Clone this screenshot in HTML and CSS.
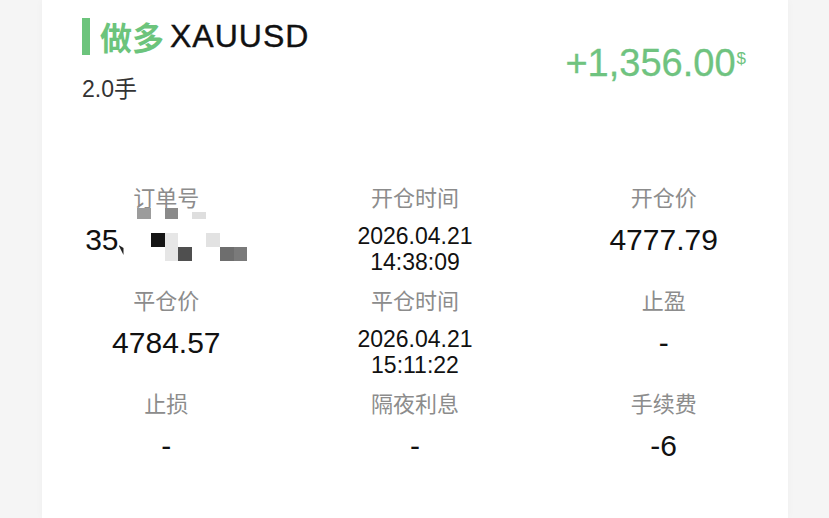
FILE: index.html
```html
<!DOCTYPE html>
<html lang="zh-CN">
<head>
  <meta charset="UTF-8" />
  <title>订单详情</title>
  <link rel="stylesheet" href="styles.css">
</head>
<body>
  <div class="card">
    <div class="head">
      <div class="head-left">
        <div class="title">
          <span class="bar"></span>
          <span class="side">做多</span>
          <span class="symbol">XAUUSD</span>
        </div>
        <div class="lots">2.0手</div>
      </div>
      <div class="profit">
        <span class="amount">+1,356.00</span>
        <span class="cur">$</span>
      </div>
    </div>

    <div class="grid">
      <div class="cell">
        <div class="label">订单号</div>
        <div class="value">35<span class="mosaic">
          <i class="m m1"></i><i class="m m2"></i><i class="m m3"></i>
          <i class="m m4"></i><i class="m m5"></i><i class="m m6"></i>
          <i class="m m7"></i><i class="m m8"></i><i class="m m9"></i>
        </span></div>
      </div>
      <div class="cell">
        <div class="label">开仓时间</div>
        <div class="value date">2026.04.21<br>14:38:09</div>
      </div>
      <div class="cell">
        <div class="label">开仓价</div>
        <div class="value">4777.79</div>
      </div>

      <div class="cell">
        <div class="label">平仓价</div>
        <div class="value">4784.57</div>
      </div>
      <div class="cell">
        <div class="label">平仓时间</div>
        <div class="value date">2026.04.21<br>15:11:22</div>
      </div>
      <div class="cell">
        <div class="label">止盈</div>
        <div class="value">-</div>
      </div>

      <div class="cell">
        <div class="label">止损</div>
        <div class="value">-</div>
      </div>
      <div class="cell">
        <div class="label">隔夜利息</div>
        <div class="value">-</div>
      </div>
      <div class="cell">
        <div class="label">手续费</div>
        <div class="value">-6</div>
      </div>
    </div>
  </div>
</body>
</html>
```

FILE: styles.css
```css
body {
  margin: 0;
  background-color: #f5f5f5;
  font-family: "Liberation Sans", "Noto Sans CJK SC", sans-serif;
  color: #111;
}
.card {
  background: white;
  margin: 0 41px 0 42px;
  min-height: 518px;
  box-shadow: 0 0 8px rgba(0,0,0,0.03);
}
.head {
  display: flex;
  justify-content: space-between;
  align-items: flex-start;
  padding: 14px 42px 0 40px;
}
.title {
  display: flex;
  align-items: center;
  height: 44px;
  font-size: 32px;
}
.bar {
  width: 8px;
  height: 37px;
  background-color: #6cc47c;
  margin-right: 10px;
}
.side {
  color: #6cc47c;
  font-weight: bold;
  margin-right: 6px;
}
.symbol {
  letter-spacing: 1px;
  color: #111;
  -webkit-text-stroke: 0.4px #111;
}
.lots {
  margin-top: 16px;
  font-size: 23px;
  line-height: 30px;
  color: #333;
}
.profit {
  display: flex;
  align-items: flex-start;
  margin-top: 27px;
  color: #6fc380;
}
.amount {
  font-size: 38px;
  line-height: 44px;
  -webkit-text-stroke: 0.3px #6fc380;
}
.cur {
  font-size: 17px;
  line-height: 17px;
  margin-top: 9px;
  margin-left: 1px;
}
.grid {
  display: grid;
  grid-template-columns: 1fr 1fr 1fr;
  row-gap: 12px;
  margin-top: 80px;
}
.cell {
  display: flex;
  flex-direction: column;
  align-items: center;
}
.label {
  font-size: 22px;
  line-height: 30px;
  color: #8c8c8c;
}
.value {
  margin-top: 9px;
  font-size: 30px;
  line-height: 34px;
  white-space: nowrap;
}
.value.date {
  font-size: 23px;
  line-height: 26px;
  text-align: center;
}
.mosaic {
  position: relative;
  display: inline-block;
  vertical-align: top;
  width: 129px;
  height: 34px;
}
.m {
  position: absolute;
  display: block;
}
.m1 { left: 18px; top: -15px; width: 14px; height: 11px; background: #9c9c9c; }
.m2 { left: 46px; top: -15px; width: 13px; height: 11px; background: #8a8a8a; }
.m3 { left: 73px; top: -11px; width: 14px; height: 7px; background: #dedede; }
.m4 { left: 32px; top: 10px; width: 14px; height: 14px; background: #151515; }
.m5 { left: 46px; top: 10px; width: 13px; height: 28px; background: #e6e6e6; }
.m6 { left: 59px; top: 24px; width: 14px; height: 14px; background: #4f4f4f; }
.m7 { left: 87px; top: 10px; width: 14px; height: 14px; background: #e2e2e2; }
.m8 { left: 101px; top: 24px; width: 14px; height: 14px; background: #6e6e6e; }
.m9 { left: 115px; top: 24px; width: 13px; height: 14px; background: #7a7a7a; }
.mosaic::before {
  content: "";
  position: absolute;
  left: 0;
  top: 22px;
  width: 5px;
  height: 10px;
  background: #222;
  clip-path: polygon(0 0, 100% 30%, 100% 100%);
}
```
